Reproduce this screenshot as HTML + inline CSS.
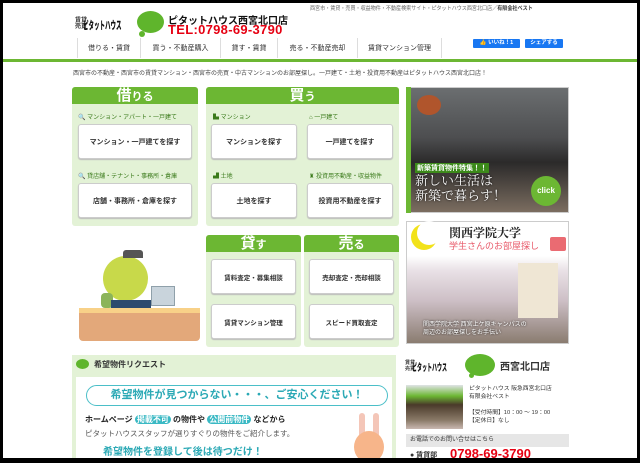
<!DOCTYPE html>
<html><head><meta charset="utf-8">
<style>
*{margin:0;padding:0;box-sizing:border-box}
body{width:640px;height:463px;overflow:hidden;background:#000;font-family:"Liberation Sans","Noto Sans CJK JP",sans-serif;position:relative}
#pg{position:absolute;left:3px;top:3px;width:634px;height:455px;background:#fff;overflow:hidden}
.a{position:absolute}
.t{white-space:nowrap}
.panel{background:#e3f2d6;border-radius:3px}
.ph{background:#6cb733;color:#fff;font-weight:bold;text-align:center;border-radius:3px 3px 0 0}
.btn{position:absolute;background:#fff;border:1px solid #ccc;border-radius:3px;box-shadow:0 1px 1px #bbb;font-size:7px;font-weight:bold;color:#333;display:flex;align-items:center;justify-content:center}
.lbl{position:absolute;font-size:6px;color:#3a7a1a;white-space:nowrap}
.nav{position:absolute;top:35px;height:20px;font-size:7px;color:#333;display:flex;align-items:center;justify-content:center;border-left:1px solid #ddd}
.sq{display:inline-block;transform-origin:0 0}
</style></head><body><div id="pg">
<!-- header -->
<div class="a t" style="left:307px;top:1px;font-size:5.5px;color:#666;transform:scaleX(.92);transform-origin:0 0">西宮市・賃貸・売買・収益物件・不動産検索サイト・ピタットハウス西宮北口店<b style="color:#333">／有限会社ベスト</b></div>
<div class="a t" style="left:72px;top:15px;font-size:6px;color:#333;font-weight:bold;line-height:6px">賃貸<br>売買</div>
<div class="a t" style="left:80px;top:14px;font-size:11px;font-weight:900;color:#111;transform:scaleX(.5);transform-origin:0 0">ピタットハウス</div>
<div class="a" style="left:134px;top:8px;width:27px;height:22px;border-radius:50%;background:#5fb52c"></div>
<div class="a" style="left:136px;top:28px;width:6px;height:6px;border-radius:50%;background:#5fb52c"></div>
<div class="a t" style="left:165px;top:9px;font-size:10px;font-weight:bold;color:#111">ピタットハウス西宮北口店</div>
<div class="a t" style="left:165px;top:19px;font-size:13px;font-weight:bold;color:#e60012;letter-spacing:.3px">TEL:0798-69-3790</div>
<div class="nav" style="left:74px;width:63px">借りる・賃貸</div>
<div class="nav" style="left:137px;width:80px">買う・不動産購入</div>
<div class="nav" style="left:217px;width:57px">貸す・賃貸</div>
<div class="nav" style="left:274px;width:80px">売る・不動産売却</div>
<div class="nav" style="left:354px;width:85px;border-right:1px solid #ddd">賃貸マンション管理</div>
<div class="a t" style="left:470px;top:36px;width:47px;height:9px;background:#1877f2;color:#fff;font-size:5.5px;font-weight:bold;text-align:center;line-height:9px;border-radius:1px">👍 いいね！1</div>
<div class="a t" style="left:522px;top:36px;width:38px;height:9px;background:#1877f2;color:#fff;font-size:5.5px;font-weight:bold;text-align:center;line-height:9px;border-radius:1px">シェアする</div>
<div class="a" style="left:0;top:56px;width:634px;height:3px;background:#6cb733"></div>
<div class="a t" style="left:70px;top:65px;font-size:6px;color:#444">西宮市の不動産・西宮市の賃貸マンション・西宮市の売買・中古マンションのお部屋探し。一戸建て・土地・投資用不動産はピタットハウス西宮北口店！</div>

<!-- 借りる -->
<div class="a panel" style="left:69px;top:84px;width:126px;height:139px"></div>
<div class="a ph" style="left:69px;top:84px;width:126px;height:17px;font-size:15px;line-height:17px">借<span style="font-size:11px">りる</span></div>
<div class="lbl" style="left:75px;top:109px">🔍 マンション・アパート・一戸建て</div>
<div class="btn" style="left:75px;top:121px;width:114px;height:35px">マンション・一戸建てを探す</div>
<div class="lbl" style="left:75px;top:168px">🔍 貸店舗・テナント・事務所・倉庫</div>
<div class="btn" style="left:75px;top:180px;width:114px;height:35px">店舗・事務所・倉庫を探す</div>

<!-- 買う -->
<div class="a panel" style="left:203px;top:84px;width:193px;height:139px"></div>
<div class="a ph" style="left:203px;top:84px;width:193px;height:17px;font-size:15px;line-height:17px">買<span style="font-size:11px">う</span></div>
<div class="lbl" style="left:210px;top:109px">▙ マンション</div>
<div class="lbl" style="left:306px;top:109px">⌂ 一戸建て</div>
<div class="btn" style="left:208px;top:121px;width:86px;height:35px">マンションを探す</div>
<div class="btn" style="left:304px;top:121px;width:86px;height:35px">一戸建てを探す</div>
<div class="lbl" style="left:210px;top:168px">▟ 土地</div>
<div class="lbl" style="left:306px;top:168px">♜ 投資用不動産・収益物件</div>
<div class="btn" style="left:208px;top:180px;width:86px;height:35px">土地を探す</div>
<div class="btn" style="left:304px;top:180px;width:86px;height:35px">投資用不動産を探す</div>

<!-- room banner -->
<div class="a" style="left:403px;top:84px;width:163px;height:126px;background:linear-gradient(180deg,#6b6e70 0%,#4d4e50 40%,#2b2a2a 60%,#7b6d60 100%);border:1px solid #ccc"></div>
<div class="a" style="left:403px;top:84px;width:5px;height:126px;background:#6cb733"></div>
<div class="a" style="left:414px;top:92px;width:24px;height:20px;border-radius:50%;background:#b0552c"></div>
<div class="a t" style="left:412px;top:160px;font-size:7px;font-weight:bold;color:#fff;background:#3c8a1a;padding:0 2px">新築賃貸物件特集！！</div>
<div class="a t" style="left:412px;top:170px;font-size:13px;color:#fff;line-height:15px;font-family:'Liberation Serif','Noto Serif CJK SC',serif;text-shadow:0 0 2px #000">新しい生活は<br>新築で暮らす！</div>
<div class="a" style="left:528px;top:173px;width:30px;height:30px;border-radius:50%;background:#6cb733;color:#fff;font-size:8px;font-weight:bold;text-align:center;line-height:30px">click</div>

<!-- turtle -->
<div class="a" style="left:100px;top:253px;width:45px;height:45px;border-radius:50%;background:#c8d94a"></div>
<div class="a" style="left:120px;top:247px;width:20px;height:8px;background:#555;border-radius:3px 3px 0 0"></div>
<div class="a" style="left:98px;top:290px;width:12px;height:15px;background:#8cb45a;border-radius:4px"></div>
<div class="a" style="left:108px;top:297px;width:40px;height:8px;background:#2c4a6e"></div>
<div class="a" style="left:148px;top:283px;width:24px;height:20px;background:#c9d4dc;border:1px solid #8fa0aa"></div>
<div class="a" style="left:76px;top:305px;width:121px;height:6px;background:#f8d188"></div>
<div class="a" style="left:76px;top:310px;width:121px;height:28px;background:#e3a87a;border-radius:0 0 4px 4px"></div>

<!-- 貸す / 売る -->
<div class="a panel" style="left:203px;top:232px;width:95px;height:112px"></div>
<div class="a ph" style="left:203px;top:232px;width:95px;height:17px;font-size:15px;line-height:17px">貸<span style="font-size:11px">す</span></div>
<div class="btn" style="left:208px;top:256px;width:85px;height:35px;font-size:6.5px">賃料査定・募集相談</div>
<div class="btn" style="left:208px;top:301px;width:85px;height:35px;font-size:6.5px">賃貸マンション管理</div>
<div class="a panel" style="left:301px;top:232px;width:95px;height:112px"></div>
<div class="a ph" style="left:301px;top:232px;width:95px;height:17px;font-size:15px;line-height:17px">売<span style="font-size:11px">る</span></div>
<div class="btn" style="left:306px;top:256px;width:85px;height:35px;font-size:6.5px">売却査定・売却相談</div>
<div class="btn" style="left:306px;top:301px;width:85px;height:35px;font-size:6.5px">スピード買取査定</div>

<!-- KG banner -->
<div class="a" style="left:403px;top:218px;width:163px;height:123px;background:linear-gradient(180deg,#fff 0%,#fff 28%,#e9e1e6 40%,#cdbfc6 65%,#8a7c70 100%);border:1px solid #ccc"></div>
<div class="a" style="left:408px;top:221px;width:26px;height:26px;border-radius:50%;background:#f2e21a"></div>
<div class="a" style="left:414px;top:218px;width:24px;height:24px;border-radius:50%;background:#fff"></div>
<div class="a t" style="left:446px;top:221px;font-size:12px;font-weight:bold;color:#222;font-family:'Liberation Serif','Noto Serif CJK SC',serif">関西学院大学</div>
<div class="a t" style="left:446px;top:236px;font-size:9px;color:#e85a6a">学生さんのお部屋探し</div>
<div class="a" style="left:547px;top:234px;width:16px;height:14px;background:#ea6b72;border-radius:2px"></div>
<div class="a" style="left:515px;top:260px;width:40px;height:55px;background:#efe6d4"></div>
<div class="a t" style="left:420px;top:318px;font-size:6px;color:#fff;line-height:8px;text-shadow:0 0 2px #000">関西学院大学 西宮上ケ原キャンパスの<br>周辺のお部屋探しをお手伝い</div>

<!-- request -->
<div class="a" style="left:69px;top:352px;width:324px;height:110px;background:#e3f2d6"></div>
<div class="a" style="left:73px;top:356px;width:13px;height:10px;border-radius:50%;background:#5fb52c"></div>
<div class="a t" style="left:91px;top:356px;font-size:8px;color:#333;font-weight:bold">希望物件リクエスト</div>
<div class="a" style="left:73px;top:374px;width:316px;height:90px;background:#fff"></div>
<div class="a t" style="left:83px;top:382px;width:302px;height:21px;border:1.5px solid #4bbfc8;border-radius:11px;text-align:center;font-size:11px;line-height:18px;color:#2ba9b5;font-weight:bold">希望物件が見つからない・・・、ご安心ください！</div>
<div class="a t" style="left:82px;top:411px;font-size:8px;font-weight:bold;color:#222">ホームページ <span style="background:#3ab9c4;color:#fff;border-radius:6px;padding:0 2px">掲載不可</span> の物件や <span style="background:#3ab9c4;color:#fff;border-radius:6px;padding:0 2px">公開前物件</span> などから</div>
<div class="a t" style="left:82px;top:425px;font-size:7.5px;color:#555">ピタットハウススタッフが選りすぐりの物件をご紹介します。</div>
<div class="a t" style="left:100px;top:440px;font-size:10px;font-weight:bold;color:#2ba9b5">希望物件を登録して後は待つだけ！</div>
<div class="a" style="left:356px;top:410px;width:6px;height:25px;border-radius:3px;background:#f4c6b8"></div>
<div class="a" style="left:370px;top:410px;width:6px;height:25px;border-radius:3px;background:#f4c6b8"></div>
<div class="a" style="left:351px;top:428px;width:30px;height:32px;border-radius:50%;background:#f7b58a"></div>

<!-- store -->
<div class="a t" style="left:402px;top:357px;font-size:5px;color:#333;font-weight:bold;line-height:6px">賃貸<br>売買</div>
<div class="a t" style="left:409px;top:356px;font-size:10px;font-weight:900;color:#111;transform:scaleX(.5);transform-origin:0 0">ピタットハウス</div>
<div class="a" style="left:462px;top:351px;width:30px;height:22px;border-radius:50%;background:#5fb52c"></div>
<div class="a" style="left:466px;top:370px;width:5px;height:5px;border-radius:50%;background:#5fb52c"></div>
<div class="a t" style="left:497px;top:355px;font-size:10px;font-weight:bold;color:#333">西宮北口店</div>
<div class="a" style="left:403px;top:382px;width:57px;height:44px;background:linear-gradient(180deg,#dfe3e6 0%,#6cb733 25%,#4a3a2a 45%,#8a7a68 80%,#c9b8b0 100%)"></div>
<div class="a t" style="left:466px;top:382px;font-size:5.8px;color:#333;line-height:8px">ピタットハウス 阪急西宮北口店<br>有限会社ベスト<br><br>【受付時間】10：00 ～ 19：00<br>【定休日】なし</div>
<div class="a t" style="left:403px;top:431px;width:163px;height:13px;background:#e6e6e6;font-size:6px;color:#333;line-height:13px;padding-left:4px">お電話でのお問い合せはこちら</div>
<div class="a t" style="left:407px;top:447px;font-size:7px;color:#333;font-weight:bold">● 賃貸部</div>
<div class="a t" style="left:447px;top:443px;font-size:13px;font-weight:bold;color:#e60012">0798-69-3790</div>
</div></body></html>
